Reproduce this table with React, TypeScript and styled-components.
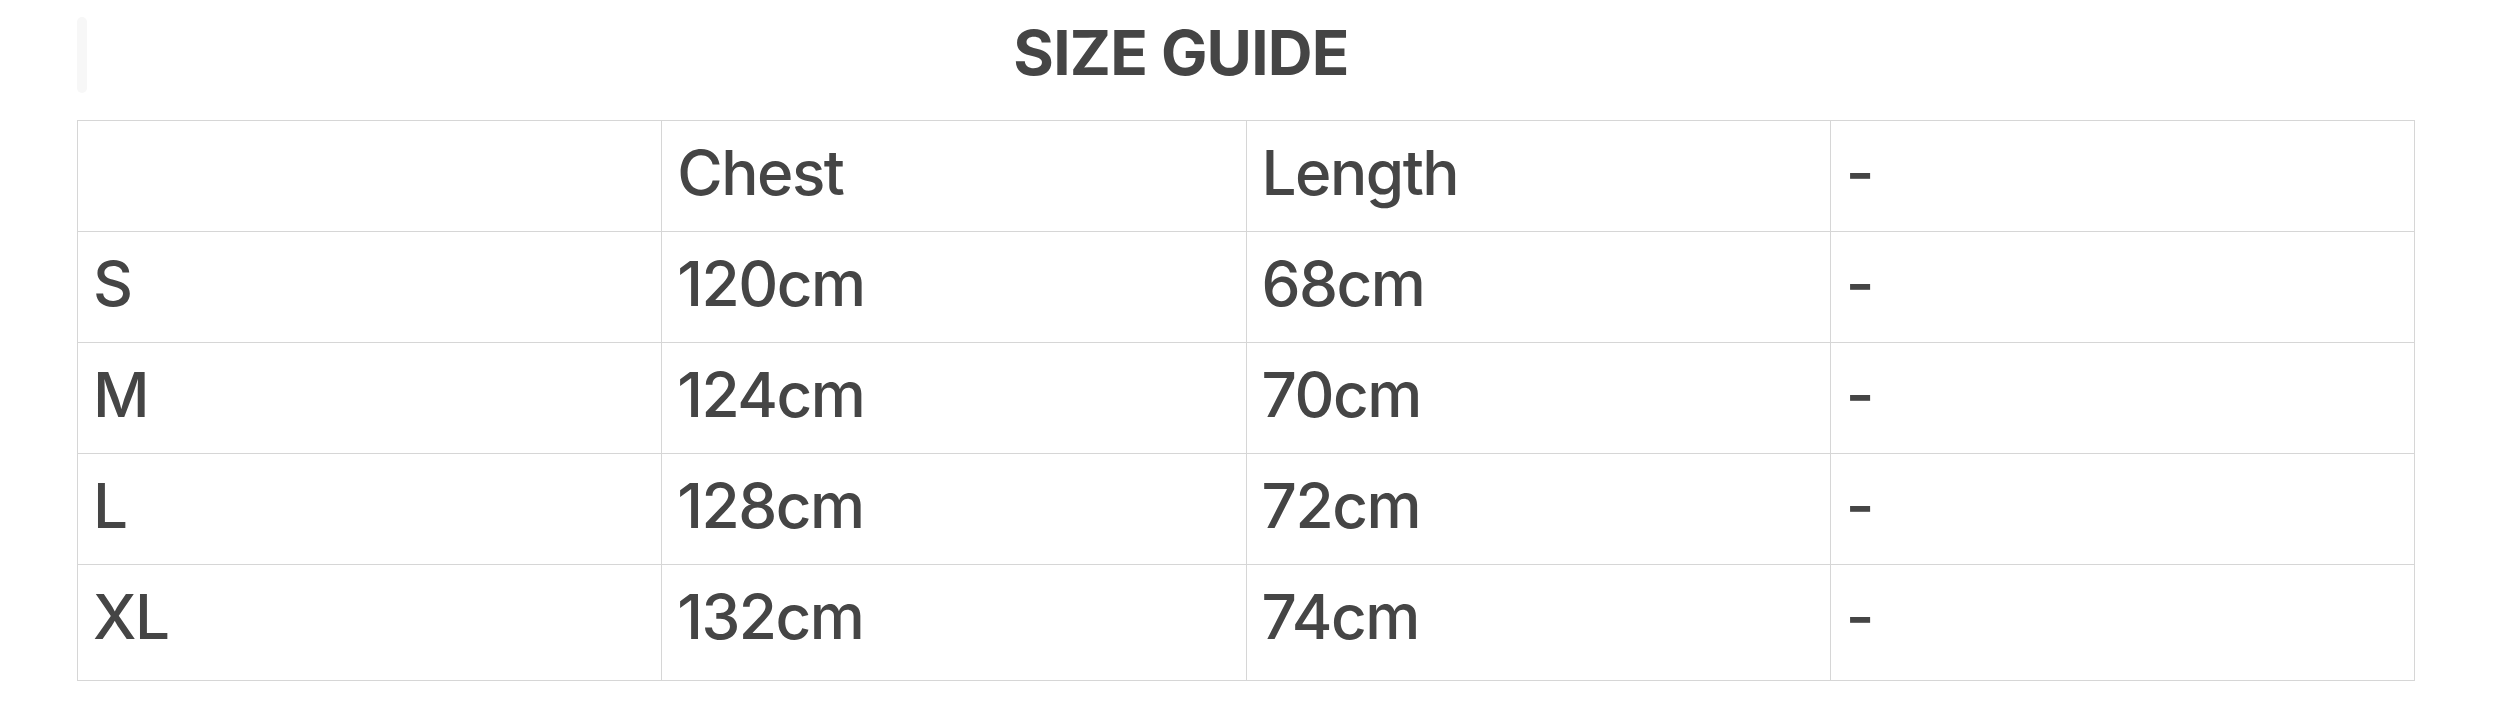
import React from "react";
import styled, { createGlobalStyle } from "styled-components";

const GlobalStyle = createGlobalStyle`
  html, body {
    margin: 0;
    padding: 0;
    background: #ffffff;
  }
  body {
    font-family: Inter, "Liberation Sans", Arial, sans-serif;
    color: #454545;
  }
`;

const Page = styled.div`
  width: 2338px;
  margin-left: 77px;
  padding-top: 15px;
`;

const Header = styled.header`
  display: flex;
  align-items: flex-start;
  padding-right: 140px;
  margin-bottom: 27px;
`;

const FaintBar = styled.div`
  width: 10px;
  height: 76px;
  margin-top: 2px;
  border-radius: 5px;
  background: #f7f7f7;
  flex: none;
`;

const Title = styled.h1`
  flex: 1;
  margin: 0;
  text-align: center;
  font-family: Inter, "Liberation Sans", Arial, sans-serif;
  font-weight: 700;
  font-size: 62px;
  line-height: 75px;
  letter-spacing: -0.8px;
  color: #454545;
`;

const Table = styled.table`
  width: 100%;
  table-layout: fixed;
  border-collapse: collapse;
  border: 1px solid #d6d6d6;
`;

const Row = styled.tr<{ $last?: boolean }>`
  & > td {
    padding-bottom: ${(p) => (p.$last ? "26px" : "21px")};
  }
`;

const Cell = styled.td`
  border: 1px solid #d6d6d6;
  padding: 14px 15px 21px 15px;
  font-family: Inter, "Liberation Sans", Arial, sans-serif;
  font-size: 62px;
  line-height: 75px;
  font-weight: 500;
  letter-spacing: -1.5px;
  color: #454545;
  vertical-align: top;
  white-space: nowrap;
`;

const header = ["", "Chest", "Length", "-"];
const rows = [
  ["S", "120cm", "68cm", "-"],
  ["M", "124cm", "70cm", "-"],
  ["L", "128cm", "72cm", "-"],
  ["XL", "132cm", "74cm", "-"],
];

export default function App() {
  return (
    <>
      <GlobalStyle />
      <Page>
        <Header>
          <FaintBar />
          <Title>SIZE GUIDE</Title>
        </Header>
        <Table>
          <tbody>
            <Row>
              {header.map((v, i) => (
                <Cell key={i}>{v}</Cell>
              ))}
            </Row>
            {rows.map((r, idx) => (
              <Row key={r[0]} $last={idx === rows.length - 1}>
                {r.map((v, i) => (
                  <Cell key={i}>{v}</Cell>
                ))}
              </Row>
            ))}
          </tbody>
        </Table>
      </Page>
    </>
  );
}
